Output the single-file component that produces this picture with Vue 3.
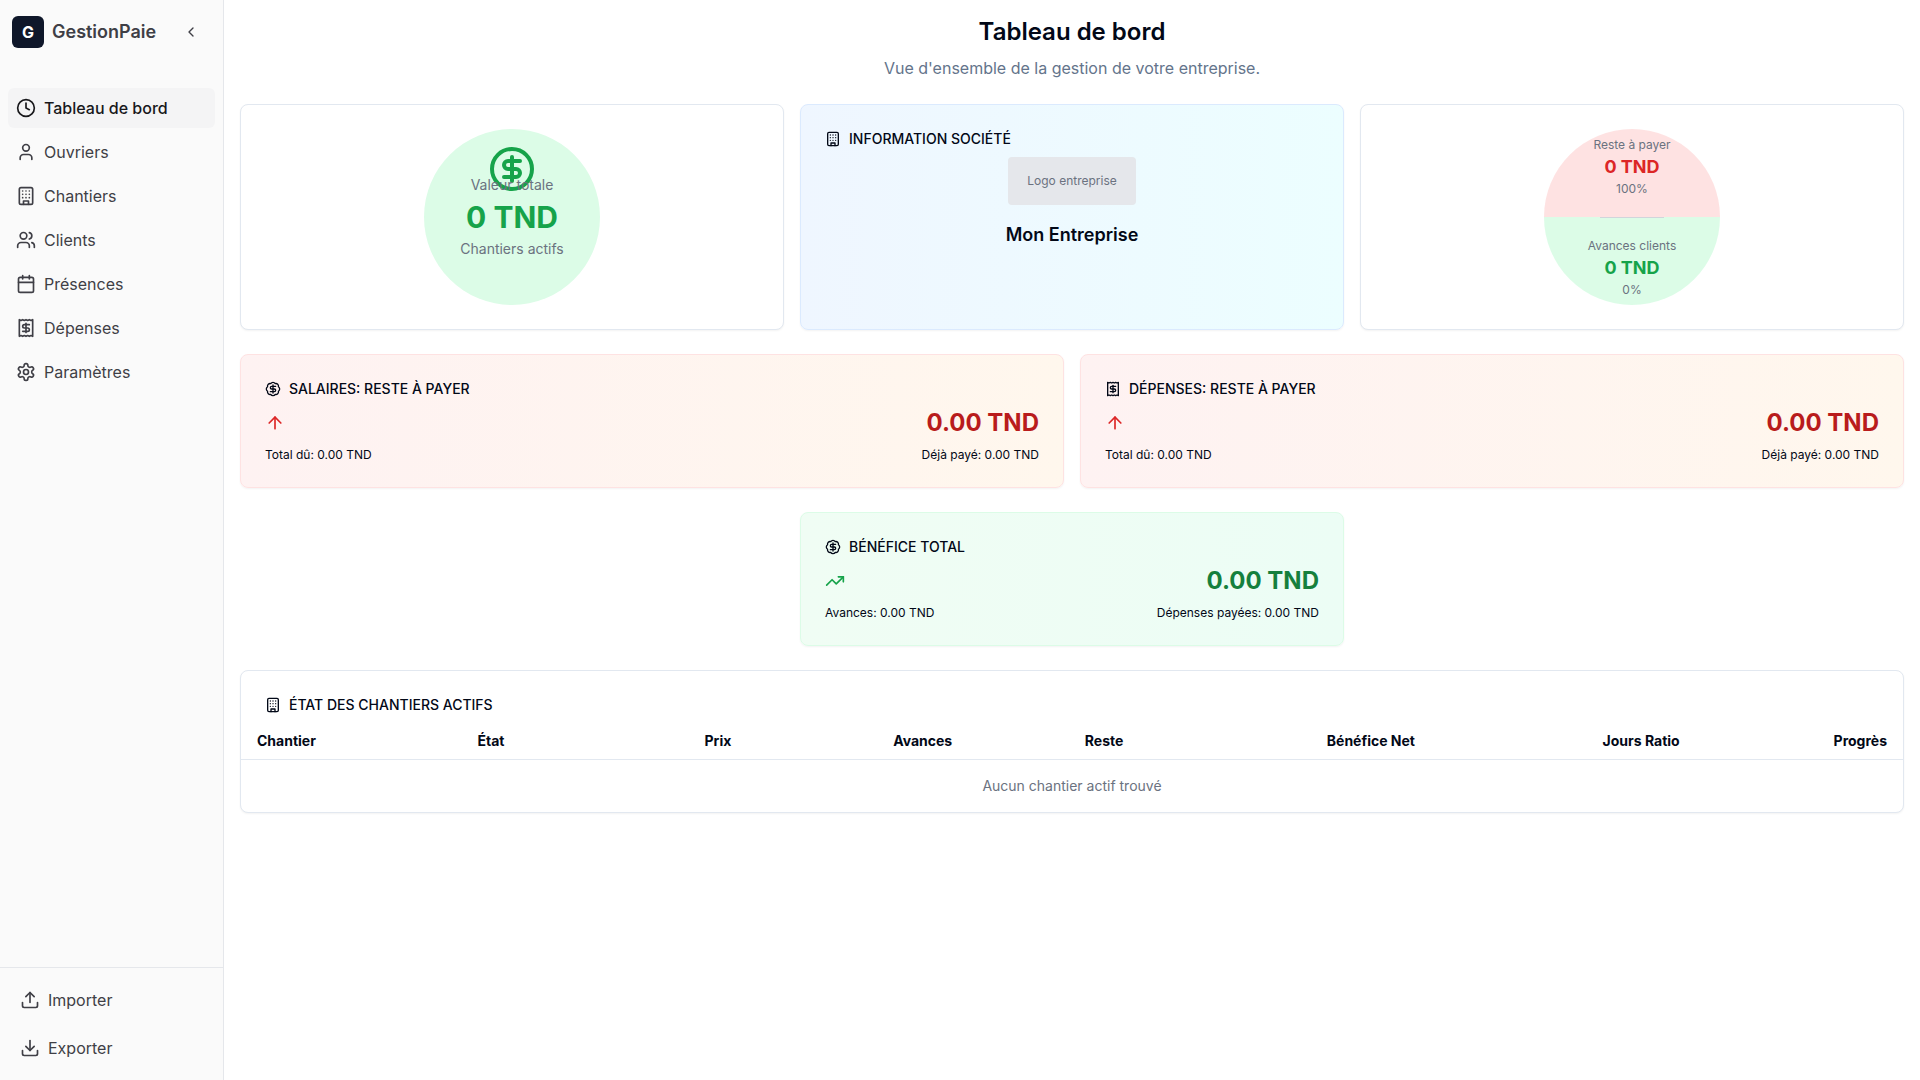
<template>
  <div class="layout">
    <aside class="sidebar">
      <div class="sidebar-header">
        <div class="brand-logo">G</div>
        <span class="brand-name">GestionPaie</span>
        <button type="button" class="collapse-btn" aria-label="Réduire le menu">
          <AppIcon name="chevronLeft" :size="16" />
        </button>
      </div>

      <nav class="sidebar-nav">
        <a
          v-for="item in navItems"
          :key="item.label"
          href="#"
          class="nav-item"
          :class="{ active: item.label === activeItem }"
          @click.prevent="activeItem = item.label"
        >
          <AppIcon :name="item.icon" :size="20" />
          <span>{{ item.label }}</span>
        </a>
      </nav>

      <div class="sidebar-footer">
        <button type="button" class="nav-item">
          <AppIcon name="upload" :size="20" />
          <span>Importer</span>
        </button>
        <button type="button" class="nav-item">
          <AppIcon name="download" :size="20" />
          <span>Exporter</span>
        </button>
      </div>
    </aside>

    <main class="content">
      <header class="page-header">
        <h1>Tableau de bord</h1>
        <p>Vue d'ensemble de la gestion de votre entreprise.</p>
      </header>

      <section class="row row-3">
        <div class="card circle-card">
          <div class="circle circle-total">
            <AppIcon name="dollar" :size="48" class="circle-icon" />
            <div class="circle-text">
              <span class="label">Valeur totale</span>
              <span class="total">0 TND</span>
              <span class="label">Chantiers actifs</span>
            </div>
          </div>
        </div>

        <div class="card card-blue">
          <h2 class="card-title"><AppIcon name="building" :size="16" />Information société</h2>
          <div class="company">
            <div class="company-logo">Logo entreprise</div>
            <p class="company-name">Mon Entreprise</p>
          </div>
        </div>

        <div class="card circle-card">
          <div class="circle circle-split">
            <div class="split-part">
              <span>Reste à payer</span>
              <strong class="red">0 TND</strong>
              <span>100%</span>
            </div>
            <div class="split-line"></div>
            <div class="split-part">
              <span>Avances clients</span>
              <strong class="green">0 TND</strong>
              <span>0%</span>
            </div>
          </div>
        </div>
      </section>

      <section class="row row-2">
        <div v-for="card in dueCards" :key="card.title" class="card card-red">
          <h2 class="card-title"><AppIcon :name="card.icon" :size="16" />{{ card.title }}</h2>
          <div class="stat">
            <AppIcon name="arrowUp" :size="20" />
            <span class="stat-value">{{ card.value }}</span>
          </div>
          <div class="stat-detail">
            <span>Total dû: {{ card.total }}</span>
            <span>Déjà payé: {{ card.paid }}</span>
          </div>
        </div>
      </section>

      <section class="row row-3">
        <div class="card card-green">
          <h2 class="card-title"><AppIcon name="badgeDollar" :size="16" />Bénéfice total</h2>
          <div class="stat">
            <AppIcon name="trendingUp" :size="20" />
            <span class="stat-value">0.00 TND</span>
          </div>
          <div class="stat-detail">
            <span>Avances: 0.00 TND</span>
            <span>Dépenses payées: 0.00 TND</span>
          </div>
        </div>
      </section>

      <section class="card table-card">
        <h2 class="card-title"><AppIcon name="building" :size="16" />État des chantiers actifs</h2>
        <table>
          <thead>
            <tr>
              <th v-for="col in columns" :key="col.label" :class="{ right: col.right }">{{ col.label }}</th>
            </tr>
          </thead>
          <tbody>
            <tr>
              <td :colspan="columns.length">Aucun chantier actif trouvé</td>
            </tr>
          </tbody>
        </table>
      </section>
    </main>
  </div>
</template>

<script setup>
import { h, ref } from 'vue'

const icons = {
  chevronLeft: ['m15 18-6-6 6-6'],
  clock: ['M2 12a10 10 0 1 0 20 0a10 10 0 1 0-20 0', 'M12 6v6l4 2'],
  user: ['M19 21v-2a4 4 0 0 0-4-4H9a4 4 0 0 0-4 4v2', 'M8 7a4 4 0 1 0 8 0a4 4 0 1 0-8 0'],
  building: [
    'M6 2h12a2 2 0 0 1 2 2v16a2 2 0 0 1-2 2H6a2 2 0 0 1-2-2V4a2 2 0 0 1 2-2z',
    'M9 22v-4h6v4',
    'M8 6h.01', 'M16 6h.01', 'M12 6h.01',
    'M12 10h.01', 'M12 14h.01',
    'M16 10h.01', 'M16 14h.01',
    'M8 10h.01', 'M8 14h.01'
  ],
  users: [
    'M16 21v-2a4 4 0 0 0-4-4H6a4 4 0 0 0-4 4v2',
    'M5 7a4 4 0 1 0 8 0a4 4 0 1 0-8 0',
    'M22 21v-2a4 4 0 0 0-3-3.87',
    'M16 3.13a4 4 0 0 1 0 7.75'
  ],
  calendar: [
    'M8 2v4', 'M16 2v4',
    'M5 4h14a2 2 0 0 1 2 2v14a2 2 0 0 1-2 2H5a2 2 0 0 1-2-2V6a2 2 0 0 1 2-2z',
    'M3 10h18'
  ],
  receipt: [
    'M4 2v20l2-1 2 1 2-1 2 1 2-1 2 1 2-1 2 1V2l-2 1-2-1-2 1-2-1-2 1-2-1-2 1Z',
    'M16 8h-6a2 2 0 1 0 0 4h4a2 2 0 1 1 0 4H8',
    'M12 17.5v-11'
  ],
  settings: [
    'M12.22 2h-.44a2 2 0 0 0-2 2v.18a2 2 0 0 1-1 1.73l-.43.25a2 2 0 0 1-2 0l-.15-.08a2 2 0 0 0-2.73.73l-.22.38a2 2 0 0 0 .73 2.73l.15.1a2 2 0 0 1 1 1.72v.51a2 2 0 0 1-1 1.74l-.15.09a2 2 0 0 0-.73 2.73l.22.38a2 2 0 0 0 2.73.73l.15-.08a2 2 0 0 1 2 0l.43.25a2 2 0 0 1 1 1.73V20a2 2 0 0 0 2 2h.44a2 2 0 0 0 2-2v-.18a2 2 0 0 1 1-1.73l.43-.25a2 2 0 0 1 2 0l.15.08a2 2 0 0 0 2.73-.73l.22-.39a2 2 0 0 0-.73-2.73l-.15-.08a2 2 0 0 1-1-1.74v-.5a2 2 0 0 1 1-1.74l.15-.09a2 2 0 0 0 .73-2.73l-.22-.38a2 2 0 0 0-2.73-.73l-.15.08a2 2 0 0 1-2 0l-.43-.25a2 2 0 0 1-1-1.73V4a2 2 0 0 0-2-2z',
    'M9 12a3 3 0 1 0 6 0a3 3 0 1 0-6 0'
  ],
  upload: ['M21 15v4a2 2 0 0 1-2 2H5a2 2 0 0 1-2-2v-4', 'm17 8-5-5-5 5', 'M12 3v12'],
  download: ['M21 15v4a2 2 0 0 1-2 2H5a2 2 0 0 1-2-2v-4', 'm7 10 5 5 5-5', 'M12 15V3'],
  dollar: [
    'M2 12a10 10 0 1 0 20 0a10 10 0 1 0-20 0',
    'M16 8h-6a2 2 0 1 0 0 4h4a2 2 0 1 1 0 4H8',
    'M12 18V6'
  ],
  badgeDollar: [
    'M3.85 8.62a4 4 0 0 1 4.78-4.77 4 4 0 0 1 6.74 0 4 4 0 0 1 4.78 4.78 4 4 0 0 1 0 6.74 4 4 0 0 1-4.77 4.78 4 4 0 0 1-6.75 0 4 4 0 0 1-4.78-4.77 4 4 0 0 1 0-6.76Z',
    'M16 8h-6a2 2 0 1 0 0 4h4a2 2 0 1 1 0 4H8',
    'M12 18V6'
  ],
  arrowUp: ['m5 12 7-7 7 7', 'M12 19V5'],
  trendingUp: ['m22 7-8.5 8.5-5-5L2 17', 'M16 7h6v6']
}

const AppIcon = ({ name, size }) =>
  h(
    'svg',
    {
      width: size,
      height: size,
      viewBox: '0 0 24 24',
      fill: 'none',
      stroke: 'currentColor',
      'stroke-width': 2,
      'stroke-linecap': 'round',
      'stroke-linejoin': 'round',
      'aria-hidden': 'true'
    },
    icons[name].map((d) => h('path', { d }))
  )
AppIcon.props = ['name', 'size']

const activeItem = ref('Tableau de bord')

const navItems = [
  { label: 'Tableau de bord', icon: 'clock' },
  { label: 'Ouvriers', icon: 'user' },
  { label: 'Chantiers', icon: 'building' },
  { label: 'Clients', icon: 'users' },
  { label: 'Présences', icon: 'calendar' },
  { label: 'Dépenses', icon: 'receipt' },
  { label: 'Paramètres', icon: 'settings' }
]

const dueCards = [
  { title: 'Salaires: reste à payer', icon: 'badgeDollar', value: '0.00 TND', total: '0.00 TND', paid: '0.00 TND' },
  { title: 'Dépenses: reste à payer', icon: 'receipt', value: '0.00 TND', total: '0.00 TND', paid: '0.00 TND' }
]

const columns = [
  { label: 'Chantier' },
  { label: 'État' },
  { label: 'Prix', right: true },
  { label: 'Avances', right: true },
  { label: 'Reste', right: true },
  { label: 'Bénéfice Net', right: true },
  { label: 'Jours Ratio', right: true },
  { label: 'Progrès', right: true }
]
</script>

<style>
body {
  background: #fff;
}
</style>

<style scoped>
.layout,
.layout * {
  box-sizing: border-box;
}

.layout {
  display: flex;
  min-height: 100vh;
  font-family: Inter, "Liberation Sans", sans-serif;
  font-size: 16px;
  line-height: 24px;
  color: #020817;
}

h1,
h2,
p {
  margin: 0;
}

svg {
  display: block;
  flex-shrink: 0;
}

button {
  border: none;
  background: transparent;
  font: inherit;
  cursor: pointer;
}

/* Sidebar */
.sidebar {
  display: flex;
  flex-direction: column;
  flex-shrink: 0;
  width: 224px;
  border-right: 1px solid #e5e7eb;
  background: #fafafa;
  color: #3f3f46;
}

.sidebar-header {
  display: flex;
  align-items: center;
  gap: 8px;
  height: 64px;
  padding: 0 16px 0 12px;
}

.brand-logo {
  display: flex;
  align-items: center;
  justify-content: center;
  width: 32px;
  height: 32px;
  border-radius: 6px;
  background: #0f172a;
  color: #fff;
  font-weight: 700;
}

.brand-name {
  font-size: 18px;
  font-weight: 600;
}

.collapse-btn {
  display: flex;
  align-items: center;
  justify-content: center;
  width: 32px;
  height: 32px;
  margin-left: auto;
  padding: 0;
  color: inherit;
}

.sidebar-nav {
  display: flex;
  flex: 1;
  flex-direction: column;
  gap: 4px;
  padding: 24px 8px;
}

.nav-item {
  display: flex;
  align-items: center;
  gap: 8px;
  height: 40px;
  padding: 0 8px;
  border-radius: 6px;
  color: #3f3f46;
  text-decoration: none;
}

.nav-item.active {
  background: #f4f4f5;
  color: #18181b;
  font-weight: 500;
}

.sidebar-footer {
  display: flex;
  flex-direction: column;
  gap: 8px;
  padding: 12px;
  border-top: 1px solid #e5e7eb;
}

/* Content */
.content {
  display: flex;
  flex: 1;
  flex-direction: column;
  gap: 24px;
  min-width: 0;
  padding: 16px;
}

.page-header {
  text-align: center;
}

.page-header h1 {
  margin-bottom: 8px;
  font-size: 24px;
  font-weight: 600;
  line-height: 32px;
}

.page-header p {
  color: #64748b;
}

.row {
  display: grid;
  gap: 16px;
}

.row-2 {
  grid-template-columns: repeat(2, 1fr);
}

.row-3 {
  grid-template-columns: repeat(3, 1fr);
}

.card {
  padding: 24px;
  border: 1px solid #e2e8f0;
  border-radius: 8px;
  background: #fff;
  box-shadow: 0 1px 2px rgba(0, 0, 0, 0.05);
}

.card-title {
  display: flex;
  align-items: center;
  gap: 8px;
  margin-bottom: 8px;
  font-size: 14px;
  font-weight: 500;
  line-height: 20px;
  text-transform: uppercase;
}

.card-blue {
  border-color: #dbeafe;
  background: linear-gradient(to right, #eff6ff, #ecfeff);
}

.card-red {
  border-color: #fee2e2;
  background: linear-gradient(to right, #fef2f2, #fff7ed);
}

.card-green {
  grid-column: 2;
  border-color: #dcfce7;
  background: linear-gradient(to right, #f0fdf4, #ecfdf5);
}

/* Circles */
.circle-card {
  display: flex;
  justify-content: center;
}

.circle {
  position: relative;
  display: flex;
  flex-direction: column;
  align-items: center;
  justify-content: center;
  width: 176px;
  height: 176px;
  border-radius: 50%;
  color: #6b7280;
}

.circle-total {
  background: #dcfce7;
}

.circle-icon {
  position: absolute;
  top: 16px;
  color: #16a34a;
}

.circle-text {
  position: relative;
  display: flex;
  flex-direction: column;
  align-items: center;
  gap: 4px;
}

.label {
  font-size: 14px;
  line-height: 20px;
}

.total {
  color: #16a34a;
  font-size: 30px;
  font-weight: 700;
  line-height: 36px;
}

.circle-split {
  gap: 20px;
  background: linear-gradient(to bottom, #fee2e2 50%, #dcfce7 50%);
}

.split-part {
  display: flex;
  flex-direction: column;
  align-items: center;
  font-size: 12px;
  line-height: 16px;
}

.split-part strong {
  font-size: 18px;
  font-weight: 700;
  line-height: 28px;
}

.split-line {
  width: 64px;
  height: 1px;
  background: #d1d5db;
}

.red {
  color: #dc2626;
}

.green {
  color: #16a34a;
}

/* Company */
.company {
  display: flex;
  flex-direction: column;
  align-items: center;
  gap: 16px;
}

.company-logo {
  display: flex;
  align-items: center;
  justify-content: center;
  width: 128px;
  height: 48px;
  border-radius: 4px;
  background: #e5e7eb;
  color: #6b7280;
  font-size: 12px;
  line-height: 16px;
}

.company-name {
  font-size: 18px;
  font-weight: 600;
  line-height: 28px;
}

/* Stats */
.stat {
  display: flex;
  align-items: center;
  justify-content: space-between;
  margin-bottom: 8px;
}

.stat-value {
  font-size: 24px;
  font-weight: 700;
  line-height: 32px;
}

.card-red .stat {
  color: #dc2626;
}

.card-red .stat-value {
  color: #b91c1c;
}

.card-green .stat {
  color: #16a34a;
}

.card-green .stat-value {
  color: #15803d;
}

.stat-detail {
  display: flex;
  justify-content: space-between;
  font-size: 12px;
  line-height: 16px;
}

/* Table */
.table-card {
  padding: 24px 0 0;
}

.table-card .card-title {
  padding: 0 24px;
}

table {
  width: 100%;
  border-spacing: 0;
  font-size: 14px;
  line-height: 20px;
}

th {
  height: 37px;
  padding: 0 16px;
  border-bottom: 1px solid #e2e8f0;
  font-weight: 700;
  text-align: left;
}

th.right {
  text-align: right;
}

td {
  padding: 16px;
  color: #6b7280;
  text-align: center;
}
</style>
